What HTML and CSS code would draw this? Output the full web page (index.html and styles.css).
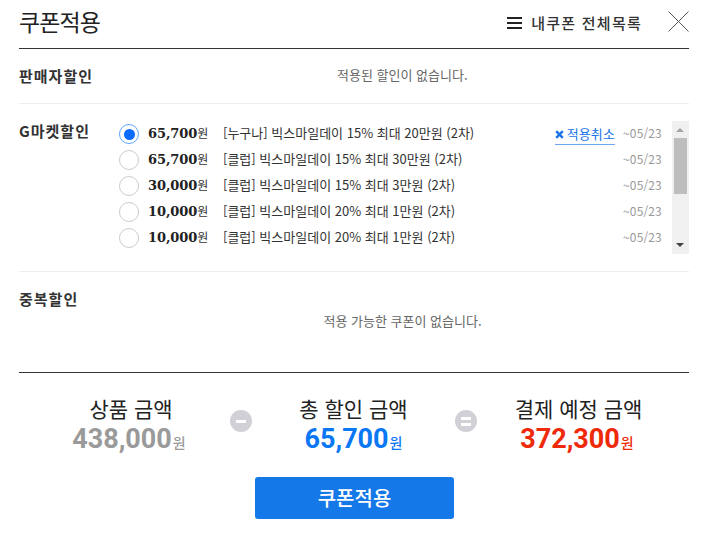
FILE: index.html
```html
<!DOCTYPE html>
<html lang="ko">
<head>
<meta charset="utf-8">
<title>쿠폰적용</title>
<link rel="stylesheet" href="styles.css">
</head>
<body>
<div class="page">
  <header class="head">
    <h1 class="title">쿠폰적용</h1>
    <div class="head-right">
      <span class="burger"><i></i><i></i><i></i></span>
      <span class="mylist">내쿠폰 전체목록</span>
      <svg class="close" width="21" height="21" viewBox="0 0 21 21"><path d="M.5.5l20 20M20.5.5l-20 20" stroke="#555" stroke-width="1" fill="none"/></svg>
    </div>
  </header>
  <section class="sec sec-seller">
    <h2 class="label">판매자할인</h2>
    <p class="empty">적용된 할인이 없습니다.</p>
  </section>
  <section class="sec sec-g">
    <h2 class="label label-g">G마켓할인</h2>
    <div class="list">
      <ul class="rows">
        <li class="row"><span class="radio on"></span><b class="amt">65,700<em>원</em></b><span class="name">[누구나] 빅스마일데이 15% 최대 20만원 (2차)</span><a class="cancel"><svg width="9" height="9" viewBox="0 0 9 9"><path d="M1.2 1.2l6.6 6.6M7.8 1.2l-6.6 6.6" stroke="#1a73e8" stroke-width="2.4"/></svg>적용취소</a><span class="date">~05/23</span></li>
        <li class="row"><span class="radio"></span><b class="amt">65,700<em>원</em></b><span class="name">[클럽] 빅스마일데이 15% 최대 30만원 (2차)</span><span class="date">~05/23</span></li>
        <li class="row"><span class="radio"></span><b class="amt">30,000<em>원</em></b><span class="name">[클럽] 빅스마일데이 15% 최대 3만원 (2차)</span><span class="date">~05/23</span></li>
        <li class="row"><span class="radio"></span><b class="amt">10,000<em>원</em></b><span class="name">[클럽] 빅스마일데이 20% 최대 1만원 (2차)</span><span class="date">~05/23</span></li>
        <li class="row"><span class="radio"></span><b class="amt">10,000<em>원</em></b><span class="name">[클럽] 빅스마일데이 20% 최대 1만원 (2차)</span><span class="date">~05/23</span></li>
      </ul>
      <div class="scroll">
        <span class="arrow up"></span>
        <span class="thumb"></span>
        <span class="arrow down"></span>
      </div>
    </div>
  </section>
  <section class="sec-dup">
    <h2 class="label">중복할인</h2>
    <p class="empty">적용 가능한 쿠폰이 없습니다.</p>
  </section>
  <section class="summary">
    <div class="sum sum-a">
      <div class="sum-label">상품 금액</div>
      <div class="sum-val gray">438,000<em>원</em></div>
    </div>
    <span class="op"><i></i></span>
    <div class="sum sum-b">
      <div class="sum-label">총 할인 금액</div>
      <div class="sum-val blue">65,700<em>원</em></div>
    </div>
    <span class="op"><i></i><i></i></span>
    <div class="sum sum-c">
      <div class="sum-label">결제 예정 금액</div>
      <div class="sum-val red">372,300<em>원</em></div>
    </div>
  </section>
  <div class="actions"><button class="apply">쿠폰적용</button></div>
</div>
</body>
</html>
```

FILE: styles.css
```css
* { box-sizing: border-box; }
html, body { margin: 0; padding: 0; background: #fff; }
body { font-family: "Noto Sans CJK KR", "Liberation Sans", sans-serif; color: #222; }
h1, h2, p, ul { margin: 0; padding: 0; }
ul { list-style: none; }
em { font-style: normal; }
.page { width: 709px; height: 533px; padding: 0 20px 0 19px; overflow: hidden; }

.head { height: 49px; border-bottom: 1px solid #333; display: flex; justify-content: space-between; align-items: flex-start; }
.title { font-size: 23px; font-weight: 400; line-height: 43px; color: #222; letter-spacing: -0.9px; }
.head-right { display: flex; align-items: center; height: 46px; }
.burger { display: flex; flex-direction: column; gap: 3px; width: 15px; margin-right: 9px; }
.burger i { display: block; height: 2px; background: #222; }
.mylist { font-size: 15px; font-weight: 500; color: #333; line-height: 46px; letter-spacing: 1.25px; margin-right: 26px; }
.close { display: block; margin-top: -4px; }

.sec { border-bottom: 1px solid #eee; }
.sec-seller { height: 55px; display: flex; }
.label { font-size: 15px; font-weight: 700; color: #333; line-height: 20px; letter-spacing: 1px; }
.sec-seller .label { margin-top: 17px; }
.empty { font-size: 13px; color: #666; line-height: 18px; text-align: center; }
.sec-seller .empty { margin: 17px 0 0 244px; }

.sec-g { height: 168px; display: flex; }
.label-g { margin-top: 17px; width: 100px; flex: none; }
.list { display: flex; height: 133px; margin-top: 17px; width: 570px; justify-content: space-between; }
.rows { width: 544px; }
.row { height: 26px; display: flex; align-items: center; }
.radio { width: 20px; height: 20px; border: 1px solid #ccc; border-radius: 50%; flex: none; display: flex; align-items: center; justify-content: center; }
.radio.on { border-color: #5aa5ff; }
.radio.on::after { content: ""; width: 11px; height: 11px; border-radius: 50%; background: #0a6cff; }
.amt { font-family: "DejaVu Serif", "Noto Sans CJK KR", serif; font-size: 13px; font-weight: 700; color: #222; margin: -4px 0 0 9px; width: 75px; letter-spacing: -0.1px; flex: none; }
.amt em { font-family: "Noto Sans CJK KR", sans-serif; font-weight: 400; font-size: 12px; color: #333; }
.name { font-size: 13px; color: #333; margin-top: -4px; }
.cancel { margin-left: auto; font-size: 13px; letter-spacing: 0.1px; color: #1a73e8; border-bottom: 1px solid #6ea8f0; line-height: 18px; height: 20px; display: flex; align-items: flex-start; gap: 3px; margin-right: 8px; margin-top: 1px; }
.cancel svg { margin-top: 5px; }
.date { font-size: 12px; letter-spacing: 0.15px; color: #999; width: 40px; flex: none; margin-top: -4px; }
.row:not(:first-child) .date { margin-left: auto; }
.scroll { width: 17px; height: 133px; background: #f0f0f0; position: relative; display: flex; flex-direction: column; align-items: center; }
.arrow { position: absolute; left: 4px; width: 0; height: 0; border-left: 4px solid transparent; border-right: 4px solid transparent; }
.arrow.up { top: 7px; border-bottom: 4px solid #a3a3a3; }
.arrow.down { bottom: 7px; border-top: 4px solid #444; }
.thumb { width: 13px; height: 56px; background: #bdbdbd; margin-top: 17px; }

.sec-dup { height: 101px; border-bottom: 1px solid #333; }
.sec-dup .label { padding-top: 17px; height: 38px; }
.sec-dup .empty { margin-top: 2px; padding-left: 97px; }

.summary { display: flex; height: 104px; align-items: flex-start; padding-left: 13px; }
.sum { text-align: center; flex: none; }
.sum-a { width: 198px; }
.sum-b { width: 203px; }
.sum-c { width: 203px; }
.sum-label { font-size: 21px; color: #222; line-height: 28px; margin-top: 21px; }
.sum-val { font-family: Roboto, sans-serif; font-size: 27px; font-weight: 700; line-height: 30px; margin-top: 2px; }
.sum-val em { font-family: "Noto Sans CJK KR", sans-serif; font-size: 14px; font-weight: 500; margin-left: 1px; }
.gray { color: #9a9a9a; padding-right: 4px; }
.blue { color: #0a78f5; }
.red { color: #ee2a0a; padding-right: 3px; }
.op { width: 22px; height: 22px; flex: none; margin-top: 37px; border-radius: 50%; background: #d0d0d6; display: flex; flex-direction: column; gap: 3px; align-items: center; justify-content: center; }
.op i { display: block; width: 10px; height: 3px; background: #fff; }

.actions { display: flex; justify-content: center; }
.apply { width: 199px; height: 42px; border: 0; border-radius: 3px; background: #1478e8; color: #fff; font-family: "Noto Sans CJK KR", sans-serif; font-size: 20px; font-weight: 500; padding: 0 0 2px 1px; }
```
